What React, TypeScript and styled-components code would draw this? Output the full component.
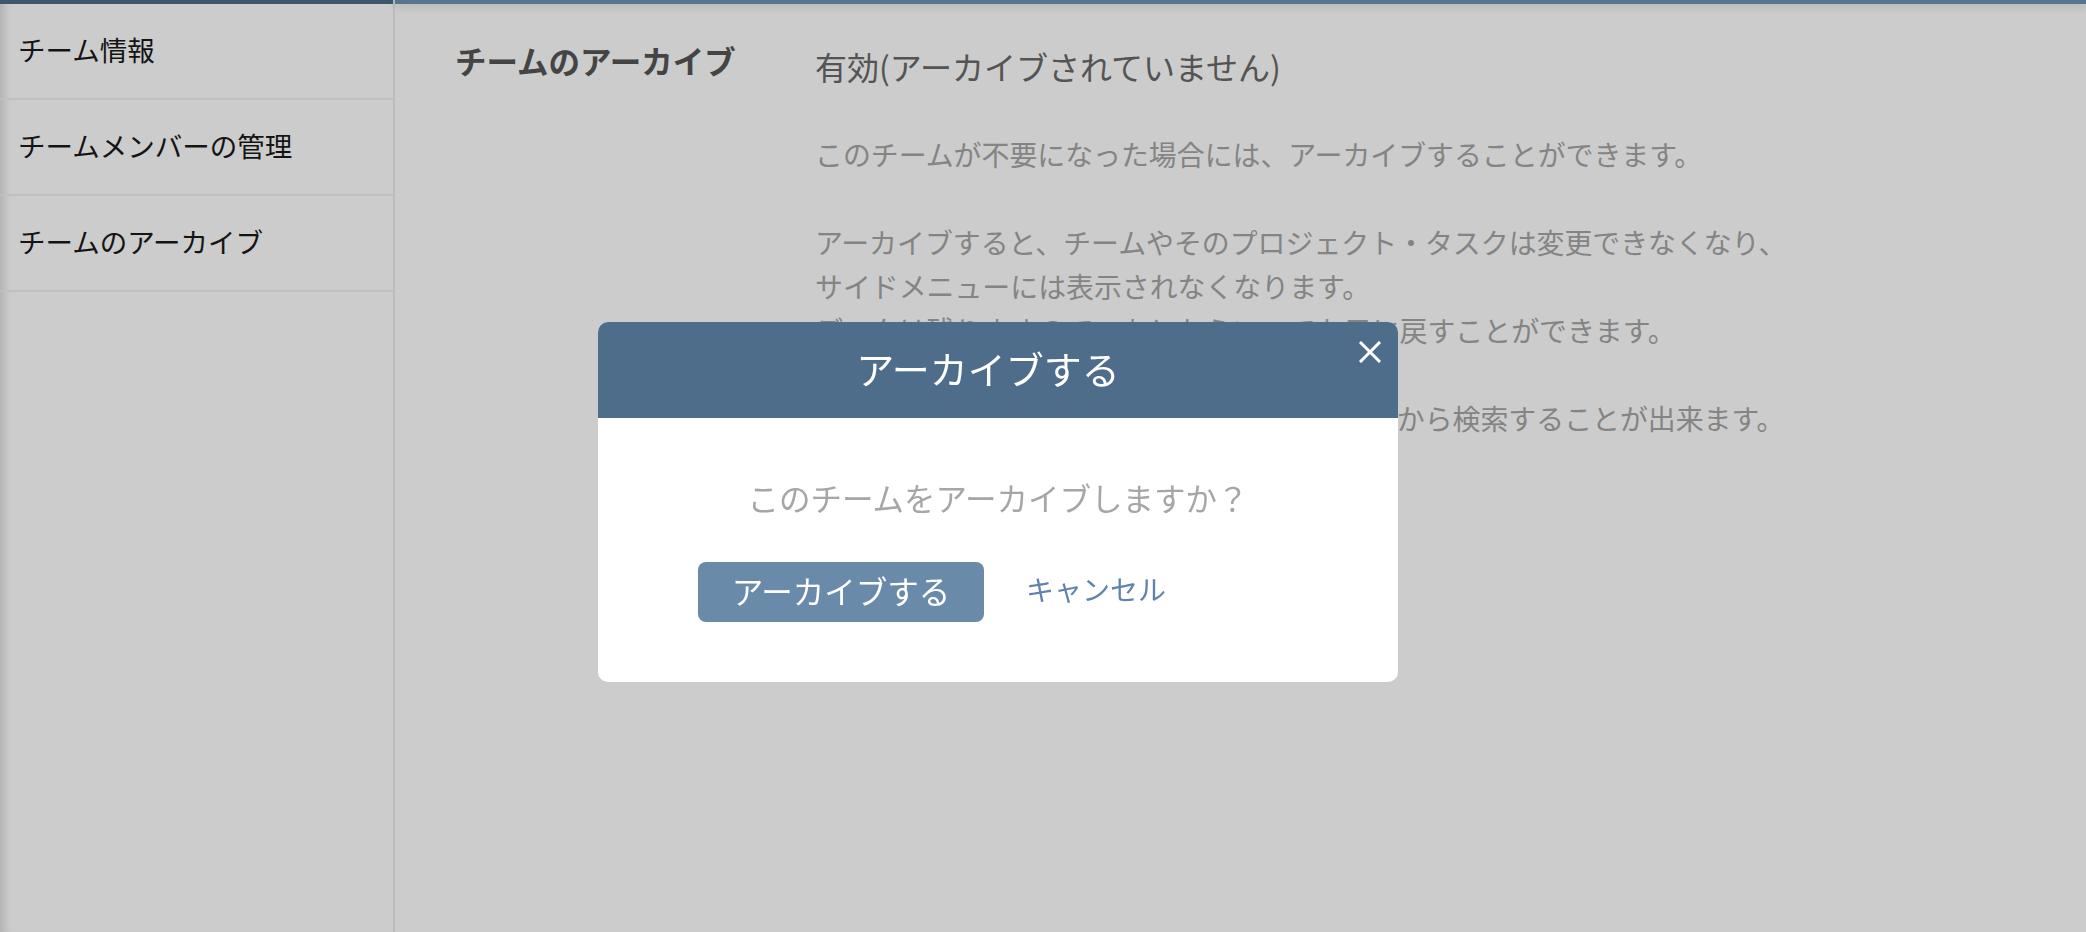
import React from 'react';
import styled, { createGlobalStyle } from 'styled-components';

const menuItems = ['チーム情報', 'チームメンバーの管理', 'チームのアーカイブ'];

const descriptionLines = [
    'このチームが不要になった場合には、アーカイブすることができます。',
    '',
    'アーカイブすると、チームやそのプロジェクト・タスクは変更できなくなり、',
    'サイドメニューには表示されなくなります。',
    'データは残りますので、あとからいつでも元に戻すことができます。',
    '',
    'アーカイブされたチームは、チーム一覧ページから検索することが出来ます。',
];

const App = () => {
    return (
        <>
            <GlobalStyle />
            <Page>
                <Sidebar>
                    <SideTopBar />
                    {menuItems.map((item) => (
                        <MenuItem key={item}>{item}</MenuItem>
                    ))}
                </Sidebar>
                <Main>
                    <MainTopBar />
                    <Content>
                        <SettingRow>
                            <SettingLabel>チームのアーカイブ</SettingLabel>
                            <SettingBody>
                                <Status>有効(アーカイブされていません)</Status>
                                <Description>
                                    {descriptionLines.map((line, i) => (
                                        <Line key={i}>{line || '\u00a0'}</Line>
                                    ))}
                                </Description>
                            </SettingBody>
                        </SettingRow>
                    </Content>
                </Main>
            </Page>
            <Overlay>
                <Modal>
                    <ModalHeader>
                        <ModalTitle>アーカイブする</ModalTitle>
                        <CloseButton aria-label="close">
                            <svg width="22" height="22" viewBox="0 0 22 22">
                                <path
                                    d="M2 2 L20 20 M20 2 L2 20"
                                    stroke="#ffffff"
                                    strokeWidth="3"
                                    strokeLinecap="square"
                                />
                            </svg>
                        </CloseButton>
                    </ModalHeader>
                    <ModalBody>
                        <Question>このチームをアーカイブしますか？</Question>
                        <Actions>
                            <PrimaryButton>アーカイブする</PrimaryButton>
                            <CancelLink>キャンセル</CancelLink>
                        </Actions>
                    </ModalBody>
                </Modal>
            </Overlay>
        </>
    );
};

const GlobalStyle = createGlobalStyle`
    html, body {
        margin: 0;
        padding: 0;
        background: #ffffff;
        font-family: "Noto Sans CJK JP", "Noto Sans", sans-serif;
    }
    * {
        box-sizing: border-box;
    }
`;

const Page = styled.div`
    display: flex;
    height: 100vh;
    overflow: hidden;
`;

const Sidebar = styled.nav`
    width: 395px;
    flex-shrink: 0;
    display: flex;
    flex-direction: column;
    background: #ffffff;
    border-right: 2px solid #ececec;
    box-shadow: inset 10px 0 8px -6px rgba(0, 0, 0, 0.14);
`;

const SideTopBar = styled.div`
    height: 4px;
    background: #4e6d8a;
`;

const MenuItem = styled.div`
    height: 96px;
    display: flex;
    align-items: center;
    padding: 0 0 5px 18px;
    font-size: 27.5px;
    color: #1a1a1a;
    border-bottom: 2px solid #f1f1f1;
`;

const Main = styled.main`
    flex: 1;
    display: flex;
    flex-direction: column;
    background: #ffffff;
`;

const MainTopBar = styled.div`
    height: 4px;
    background: #7092b5;
    box-shadow: 0 2px 8px rgba(0, 0, 0, 0.18);
`;

const Content = styled.div`
    padding: 40px 60px;
`;

const SettingRow = styled.div`
    display: flex;
    align-items: flex-start;
`;

const SettingLabel = styled.div`
    width: 360px;
    flex-shrink: 0;
    font-size: 31.5px;
    font-weight: 700;
    line-height: 32px;
    color: #555555;
`;

const SettingBody = styled.div`
    display: flex;
    flex-direction: column;
    gap: 44px;
`;

const Status = styled.div`
    font-size: 32px;
    line-height: 44px;
    color: #6a6a6a;
`;

const Description = styled.div`
    display: flex;
    flex-direction: column;
`;

const Line = styled.div`
    font-size: 27.9px;
    line-height: 44px;
    color: #a6a6a6;
    white-space: nowrap;
`;

const Overlay = styled.div`
    position: fixed;
    inset: 0;
    background: rgba(0, 0, 0, 0.2);
    display: flex;
    align-items: flex-start;
    padding: 322px 0 0 598px;
`;

const Modal = styled.div`
    position: relative;
    width: 800px;
    background: #ffffff;
    border-radius: 10px;
    overflow: hidden;
`;

const ModalHeader = styled.div`
    height: 96px;
    background: #4e6d8a;
    display: flex;
    align-items: center;
    justify-content: center;
    padding: 0 20px 5px 0;
`;

const ModalTitle = styled.h2`
    margin: 0;
    font-size: 38px;
    font-weight: 400;
    color: #ffffff;
`;

const CloseButton = styled.button`
    position: absolute;
    top: 19px;
    right: 17px;
    padding: 0;
    border: none;
    background: none;
    display: flex;
    cursor: pointer;
`;

const ModalBody = styled.div`
    padding: 57px 0 60px 100px;
    display: flex;
    flex-direction: column;
    gap: 43px;
`;

const Question = styled.div`
    margin-left: -100px;
    text-align: center;
    font-size: 31.5px;
    line-height: 44px;
    color: #a6a6a6;
`;

const Actions = styled.div`
    display: flex;
    align-items: center;
    gap: 42px;
`;

const PrimaryButton = styled.button`
    width: 286px;
    height: 60px;
    padding: 0 0 5px;
    border: none;
    border-radius: 8px;
    background: #6a8aaa;
    color: #ffffff;
    font-family: inherit;
    font-size: 31.5px;
    cursor: pointer;
`;

const CancelLink = styled.a`
    font-size: 28px;
    line-height: 1;
    padding-bottom: 6px;
    color: #5f83aa;
    cursor: pointer;
`;

export default App;
